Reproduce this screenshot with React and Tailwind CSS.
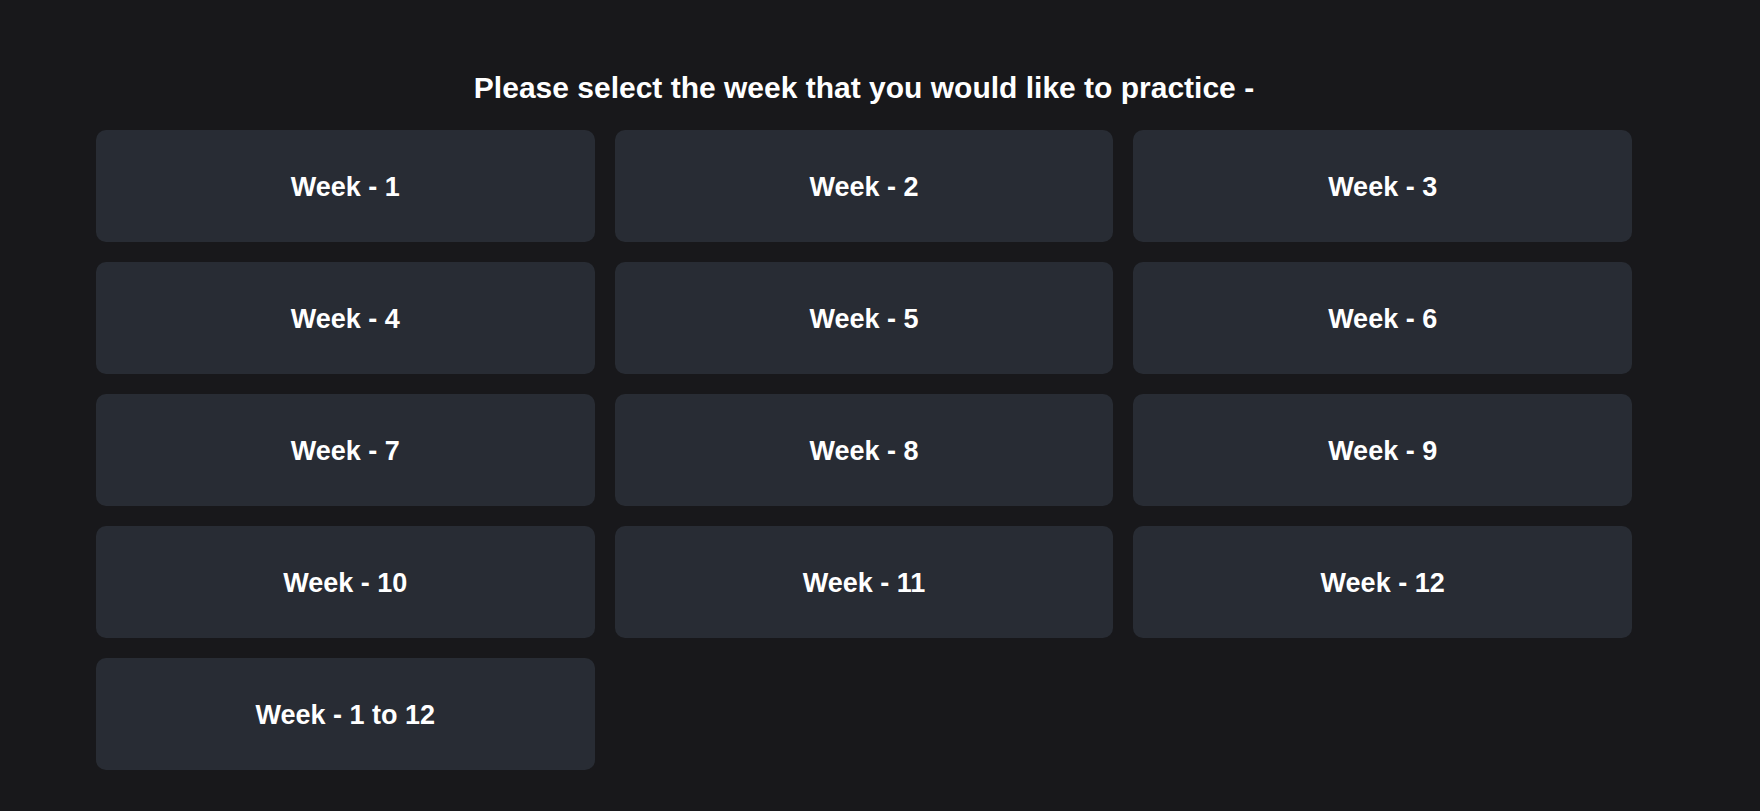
import React from "react";

const weeks = [
  "Week - 1", "Week - 2", "Week - 3",
  "Week - 4", "Week - 5", "Week - 6",
  "Week - 7", "Week - 8", "Week - 9",
  "Week - 10", "Week - 11", "Week - 12",
  "Week - 1 to 12",
];

export default function App() {
  return (
    <div
      className="min-h-[811px] w-full bg-[#18181b] text-white"
      style={{ fontFamily: '"Liberation Sans", Arial, sans-serif' }}
    >
      <div className="ml-[96px] w-[1536px] pt-[70px]">
        <h1 className="text-center text-[30px] font-bold leading-[36px] mb-[24px]">
          Please select the week that you would like to practice -
        </h1>
        <div className="grid grid-cols-3 gap-[20px]">
          {weeks.map((w) => (
            <button
              key={w}
              className="flex h-[112px] items-center justify-center rounded-[10px] bg-[#282c34] pt-[2px] text-[27px] font-bold text-white"
            >
              {w}
            </button>
          ))}
        </div>
      </div>
    </div>
  );
}
